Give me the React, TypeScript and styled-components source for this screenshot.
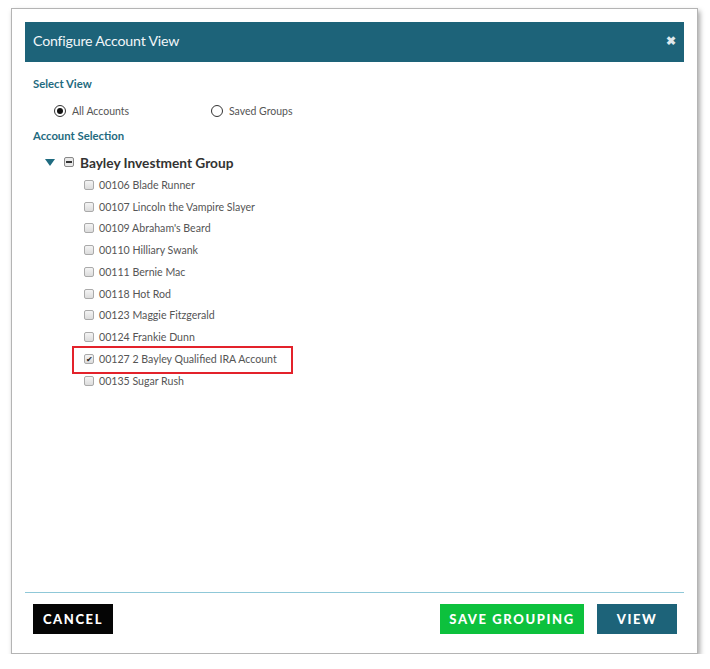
import React from "react";
import styled, { createGlobalStyle } from "styled-components";

const Global = createGlobalStyle`
  html, body { margin: 0; padding: 0; background: #ffffff; }
  body { font-family: "Lato", "Noto Sans", sans-serif; }
`;

const Frame = styled.div`
  margin: 8px 0 0 11px;
  width: 687px;
  height: 646px;
  box-sizing: border-box;
  border: 1px solid #b4b4b4;
  box-shadow: 2px 3px 5px rgba(0,0,0,0.35);
  background: #fff;
  padding: 13px 13px 0 13px;
  display: flex;
  flex-direction: column;
`;

const Header = styled.div`
  height: 40px;
  box-sizing: border-box;
  background: #1d6379;
  display: flex;
  align-items: center;
  justify-content: space-between;
  padding: 0 8px 3px 8px;
  color: #fff;
`;

const Title = styled.div`
  font-size: 14.2px;
  letter-spacing: -0.2px;
  color: #f2f6f8;
`;

const Close = styled.div`
  font-size: 12px;
  font-weight: 700;
  color: #dfe8ec;
  line-height: 1;
`;

const Body = styled.div`
  flex: 1;
  padding: 15px 8px 0 8px;
`;

const Label = styled.div`
  font-size: 11.3px;
  font-weight: 700;
  color: #1f6b80;
  height: 14px;
  line-height: 14px;
`;

const RadioRow = styled.div`
  display: flex;
  align-items: center;
  height: 14px;
  margin: 13px 0 11px 21px;
`;

const RadioOption = styled.label<{ $width: number }>`
  display: flex;
  align-items: center;
  width: ${(p) => p.$width}px;
  font-size: 10.5px;
  color: #555;
`;

const RadioCircle = styled.span<{ $on?: boolean }>`
  width: 12px;
  height: 12px;
  box-sizing: border-box;
  border-radius: 50%;
  border: 1.3px solid #333;
  margin-right: 6px;
  display: inline-flex;
  align-items: center;
  justify-content: center;
  &::after {
    content: "";
    width: 6px;
    height: 6px;
    border-radius: 50%;
    background: ${(p) => (p.$on ? "#111" : "transparent")};
  }
`;

const GroupRow = styled.div`
  display: flex;
  align-items: center;
  height: 20px;
  margin: 9px 0 2px 12px;
`;

const Triangle = styled.span`
  width: 0;
  height: 0;
  border-left: 5px solid transparent;
  border-right: 5px solid transparent;
  border-top: 7px solid #1f6b80;
  margin-right: 9px;
`;

const MinusBox = styled.span`
  width: 10px;
  height: 10px;
  box-sizing: border-box;
  border: 1px solid #888;
  border-radius: 2px;
  background: #e8e8e8;
  display: inline-flex;
  align-items: center;
  justify-content: center;
  margin-right: 6px;
  &::after {
    content: "";
    width: 6px;
    height: 2px;
    background: #333;
  }
`;

const GroupName = styled.span`
  font-size: 13.7px;
  font-weight: 700;
  color: #333;
`;

const List = styled.div`
  display: flex;
  flex-direction: column;
  padding-left: 51px;
`;

const Item = styled.div`
  position: relative;
  display: flex;
  align-items: center;
  height: 21.75px;
  font-size: 10.6px;
  color: #555;
`;

const Highlight = styled.span`
  position: absolute;
  left: -12px;
  top: -2px;
  width: 221px;
  height: 28px;
  box-sizing: border-box;
  border: 2px solid #e3222b;
`;

const Check = styled.span`
  width: 10px;
  height: 10px;
  box-sizing: border-box;
  border: 1px solid #aaa;
  border-radius: 2px;
  background: linear-gradient(#f4f4f4, #dcdcdc);
  margin-right: 5px;
  display: inline-flex;
  align-items: center;
  justify-content: center;
  font-size: 8px;
  line-height: 1;
  color: #222;
`;

const Footer = styled.div`
  border-top: 1px solid #8fc8d8;
  display: flex;
  align-items: flex-start;
  padding: 11px 7px 0 8px;
  height: 61px;
  box-sizing: border-box;
`;

const Spacer = styled.div`
  flex: 1;
`;

const Button = styled.button<{ $bg: string; $w: number }>`
  background: ${(p) => p.$bg};
  width: ${(p) => p.$w}px;
  height: 30px;
  border: none;
  color: #fff;
  font-family: "Lato", "Noto Sans", sans-serif;
  font-weight: 900;
  font-size: 13px;
  letter-spacing: 1.6px;
  padding: 0;
  margin-left: 13px;
  &:first-child { margin-left: 0; }
`;

const accounts = [
  "00106 Blade Runner",
  "00107 Lincoln the Vampire Slayer",
  "00109 Abraham's Beard",
  "00110 Hilliary Swank",
  "00111 Bernie Mac",
  "00118 Hot Rod",
  "00123 Maggie Fitzgerald",
  "00124 Frankie Dunn",
  "00127 2 Bayley Qualified IRA Account",
  "00135 Sugar Rush",
];

export default function App() {
  return (
    <>
      <Global />
      <Frame>
        <Header>
          <Title>Configure Account View</Title>
          <Close>✖</Close>
        </Header>
        <Body>
          <Label>Select View</Label>
          <RadioRow>
            <RadioOption $width={157}>
              <RadioCircle $on />
              All Accounts
            </RadioOption>
            <RadioOption $width={120}>
              <RadioCircle />
              Saved Groups
            </RadioOption>
          </RadioRow>
          <Label>Account Selection</Label>
          <GroupRow>
            <Triangle />
            <MinusBox />
            <GroupName>Bayley Investment Group</GroupName>
          </GroupRow>
          <List>
            {accounts.map((a) => {
              const on = a.startsWith("00127");
              return (
                <Item key={a}>
                  {on && <Highlight />}
                  <Check>{on ? "✔" : ""}</Check>
                  {a}
                </Item>
              );
            })}
          </List>
        </Body>
        <Footer>
          <Button $bg="#050505" $w={80}>CANCEL</Button>
          <Spacer />
          <Button $bg="#0dc13d" $w={144}>SAVE GROUPING</Button>
          <Button $bg="#1d6379" $w={80}>VIEW</Button>
        </Footer>
      </Frame>
    </>
  );
}
